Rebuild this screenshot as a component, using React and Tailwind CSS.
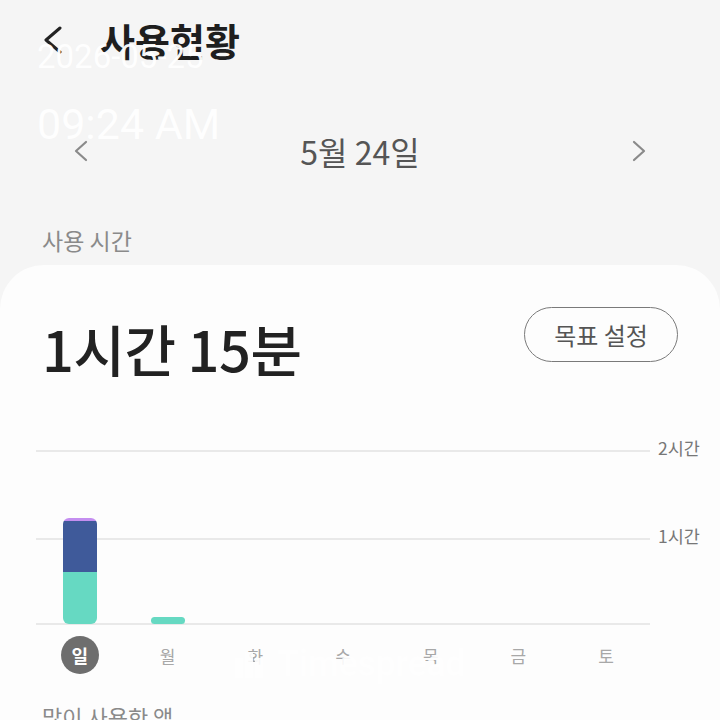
import React from "react";

const KR = { fontFamily: '"Noto Sans CJK KR", "Noto Sans", sans-serif' };

function Chevron({ dir = "left", className = "", w = 16, h = 28, sw = 3, color = "#222" }) {
  const d = dir === "left" ? `M${w - 2} 2 L2 ${h / 2} L${w - 2} ${h - 2}` : `M2 2 L${w - 2} ${h / 2} L2 ${h - 2}`;
  return (
    <svg width={w} height={h} viewBox={`0 0 ${w} ${h}`} className={className}>
      <path d={d} fill="none" stroke={color} strokeWidth={sw} strokeLinecap="round" strokeLinejoin="round" />
    </svg>
  );
}

const days = ["일", "월", "화", "수", "목", "금", "토"];

export default function App() {
  return (
    <div className="relative w-[720px] h-[720px] overflow-hidden bg-[#f5f5f5]" style={KR}>
      {/* header */}
      <div className="h-[80px] flex items-center pl-[44px]">
        <Chevron dir="left" w={18} h={28} sw={3} color="#222" />
        <div className="ml-[38px] text-[38px] font-bold text-[#1e1e1e] leading-none">사용현황</div>
      </div>

      {/* date nav */}
      <div className="h-[136px] pt-[6px] flex items-center justify-between px-[74px]">
        <Chevron dir="left" w={14} h={22} sw={2.2} color="#8a8a8a" />
        <div className="text-[32px] text-[#555] leading-none">5월 24일</div>
        <Chevron dir="right" w={14} h={22} sw={2.2} color="#8a8a8a" />
      </div>

      {/* section label */}
      <div className="h-[49px] flex items-center pl-[42px] text-[23px] text-[#8a8a8a] leading-none">사용 시간</div>

      {/* card */}
      <div className="bg-[#fdfdfd] rounded-t-[44px] h-[500px] pt-[42px]">
        <div className="flex items-start justify-between pl-[42px] pr-[42px]">
          <div className="mt-[13px] text-[56px] font-medium text-[#222] leading-[56px] tracking-[-0.5px]">1시간 15분</div>
          <div className="w-[154px] h-[55px] rounded-full border-[1.5px] border-[#7a7a7a] flex items-center justify-center text-[24px] text-[#555] leading-none">
            목표 설정
          </div>
        </div>

        {/* chart */}
        <div className="relative ml-[36px] w-[614px] h-[175px] mt-[74px]">
          <div className="absolute left-0 right-0 top-0 h-[1.5px] bg-[#e9e9e9]" />
          <div className="absolute left-0 right-0 top-[88px] h-[1.5px] bg-[#e9e9e9]" />
          <div className="absolute left-0 right-0 top-[173px] h-[1.5px] bg-[#e9e9e9]" />
          <div className="absolute left-[622px] top-[-11px] text-[17.5px] text-[#777] leading-none whitespace-nowrap">2시간</div>
          <div className="absolute left-[622px] top-[77px] text-[17.5px] text-[#777] leading-none whitespace-nowrap">1시간</div>
          <div className="absolute inset-x-0 bottom-[1px] top-0 grid grid-cols-7 items-end">
            <div className="flex justify-center">
              <div className="w-[34px] h-[106px] rounded-[6px] overflow-hidden flex flex-col">
                <div className="h-[3px] bg-[#c48ef0]" />
                <div className="h-[51px] bg-[#3f5a9a]" />
                <div className="flex-1 bg-[#66d9c2]" />
              </div>
            </div>
            <div className="flex justify-center">
              <div className="w-[34px] h-[7px] rounded-[4px] bg-[#66d9c2]" />
            </div>
            <div />
            <div />
            <div />
            <div />
            <div />
          </div>
        </div>

        {/* day labels */}
        <div className="ml-[36px] w-[614px] grid grid-cols-7 mt-[11px]">
          {days.map((d, i) => (
            <div key={d} className="flex justify-center">
              {i === 0 ? (
                <div className="w-[38px] h-[38px] rounded-full bg-[#6e6e6e] flex items-center justify-center text-[18px] font-bold text-white leading-none">
                  {d}
                </div>
              ) : (
                <div className="h-[38px] flex items-center text-[17px] text-[#a8a8a8] leading-none">{d}</div>
              )}
            </div>
          ))}
        </div>

        <div className="pl-[42px] mt-[31px] text-[22px] text-[#8a8a8a] leading-none">많이 사용한 앱</div>
      </div>

      {/* timestamp overlay */}
      <div className="absolute left-[37px] top-[40px] text-white opacity-95 pointer-events-none" style={{ fontFamily: "Roboto, sans-serif" }}>
        <div className="text-[33px] leading-none">2026-05-25</div>
        <div className="text-[43px] leading-none mt-[30px]">09:24 AM</div>
      </div>

      {/* watermark */}
      <div className="absolute left-[235px] top-[646px] flex items-center gap-[14px] text-white opacity-90 pointer-events-none" style={{ fontFamily: "Roboto, sans-serif" }}>
        <svg width="28" height="28" viewBox="0 0 28 28">
          <rect x="0" y="8" width="8" height="20" fill="#fff" />
          <rect x="10" y="2" width="8" height="26" fill="#fff" />
          <rect x="20" y="8" width="8" height="20" fill="#fff" />
        </svg>
        <div className="text-[36px] font-bold leading-none tracking-[-0.5px]">Timespread</div>
      </div>
    </div>
  );
}
